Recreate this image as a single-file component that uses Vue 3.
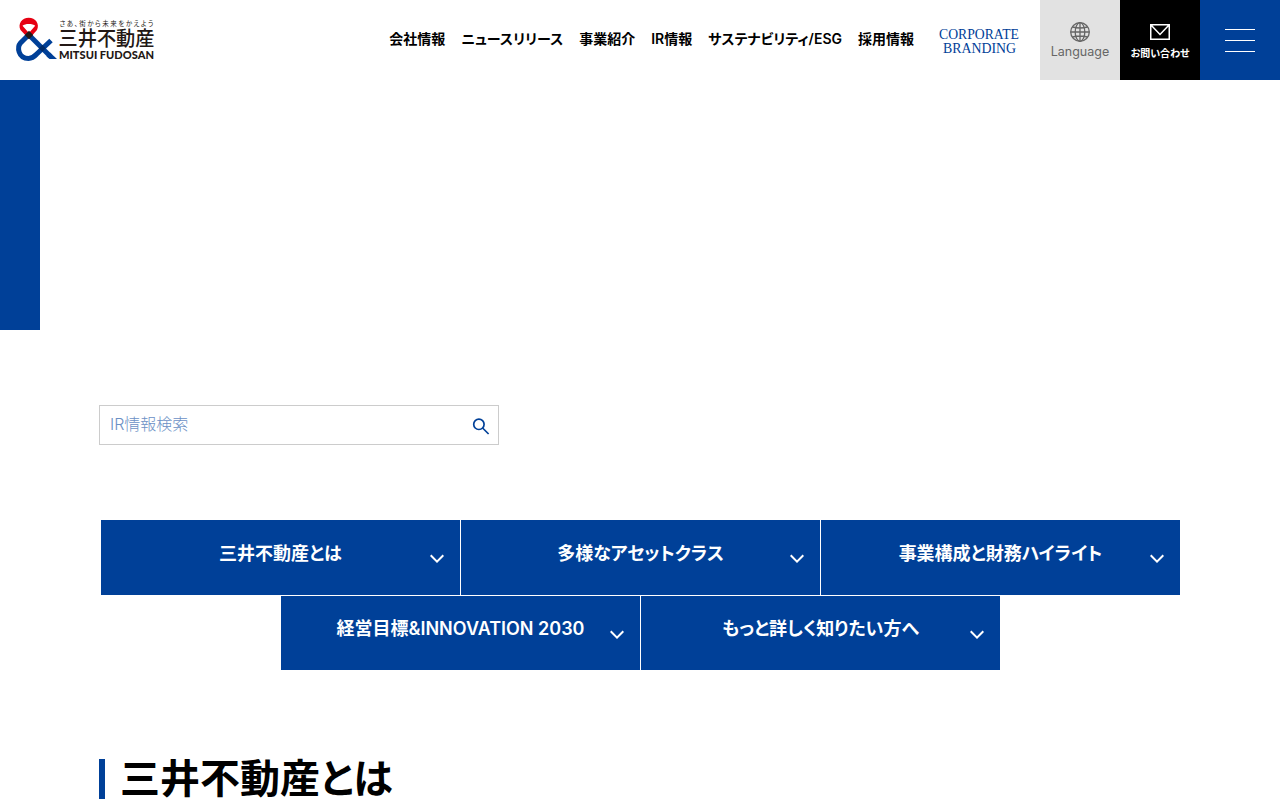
<script setup>
import { ref } from 'vue';

const keyword = ref('');

const navItems = [
  { label: '会社情報', name: 'company' },
  { label: 'ニュースリリース', name: 'news' },
  { label: '事業紹介', name: 'business' },
  { label: 'IR情報', name: 'ir' },
  { label: 'サステナビリティ/ESG', name: 'esg' },
  { label: '採用情報', name: 'recruit' },
];

const anchorRows = [
  [
    { label: '三井不動産とは', name: 'about' },
    { label: '多様なアセットクラス', name: 'asset' },
    { label: '事業構成と財務ハイライト', name: 'highlight' },
  ],
  [
    { label: '経営目標&INNOVATION 2030', name: 'innovation' },
    { label: 'もっと詳しく知りたい方へ', name: 'more' },
  ],
];
</script>

<template>
  <header class="header">
    <a class="logo" href="#">
      <svg width="160" height="80" viewBox="0 0 160 80">
        <path d="M29 39 L20.5 30 C17.5 24 22 17.8 28.7 17.8 C35.5 17.8 40 24 37 30Z M22.5 25.8 L28.9 33 L35.2 25.8 C33 23.4 24.8 23.4 22.5 25.8Z" fill="#e60012" fill-rule="evenodd" />
        <g fill="none" stroke="#004098" stroke-width="5">
          <path d="M29 34.5 L20.5 43 C17 47 18 58.4 28.5 58.4 C32 58.4 34.5 56.5 36.5 54.3 L51 40.5" />
          <path d="M28 34 L50.5 56.5" />
        </g>
        <path d="M46.5 56.2 L50 52.4 L57 59 L49.5 59Z" fill="#004098" />
        <path d="M29 30.8 L33.2 35 L29 39.2 L24.8 35Z" fill="#231815" />
        <path d="M42.3 44.8 L45.8 48.3 L42.3 51.8 L38.8 48.3Z" fill="#002b68" />
        <text class="logo-tagline" x="59.5" y="25.5" textLength="94">さあ、街から未来をかえよう</text>
        <text class="logo-name" x="58.5" y="46.3" textLength="96" lengthAdjust="spacingAndGlyphs">三井不動産</text>
        <text class="logo-roman" x="59" y="59" textLength="95" lengthAdjust="spacingAndGlyphs">MITSUI FUDOSAN</text>
      </svg>
    </a>
    <nav class="nav">
      <a v-for="item in navItems" :key="item.name" href="#" :class="['nav-item', item.name]">{{ item.label }}</a>
    </nav>
    <a class="branding" href="#">
      <svg width="82" height="30" viewBox="0 0 82 30">
        <text x="0" y="14" textLength="80" lengthAdjust="spacingAndGlyphs">CORPORATE</text>
        <text x="4" y="28" textLength="73" lengthAdjust="spacingAndGlyphs">BRANDING</text>
      </svg>
    </a>
    <button class="tile language">
      <svg width="20" height="20" viewBox="0 0 20 20" fill="none" stroke="#666" stroke-width="1.3">
        <circle cx="10" cy="10" r="9.3" />
        <ellipse cx="10" cy="10" rx="4.8" ry="9.3" />
        <path d="M10 .7V19.3M.7 10H19.3M2.5 5Q10 7 17.5 5M2.5 15Q10 13 17.5 15" />
      </svg>
      <span>Language</span>
    </button>
    <a class="tile contact" href="#">
      <svg width="20" height="16" viewBox="0 0 20 16" fill="none" stroke="#fff" stroke-width="1.5">
        <path d="M.75 .75H19.25V15.25H.75ZM1 1L10 10.5L19 1" />
      </svg>
      <span>お問い合わせ</span>
    </a>
    <button class="tile menu">
      <i></i>
      <i></i>
      <i></i>
    </button>
  </header>

  <div class="hero-bar"></div>

  <main class="main">
    <form class="search" @submit.prevent>
      <input v-model="keyword" type="text" placeholder="IR情報検索" />
      <button class="search-button" aria-label="検索">
        <svg width="18" height="18" viewBox="0 0 18 18" fill="none" stroke="#004098" stroke-width="1.7">
          <circle cx="6.9" cy="7.3" r="5.2" />
          <path d="M10.6 11L16.6 17" />
        </svg>
      </button>
    </form>

    <div class="anchors">
      <div v-for="(row, i) in anchorRows" :key="i" class="anchor-row">
        <a v-for="item in row" :key="item.name" href="#" class="anchor">
          <span :class="['anchor-label', item.name]">{{ item.label }}</span>
          <svg class="chevron" width="14" height="10" viewBox="0 0 14 10" fill="none" stroke="#fff" stroke-width="2">
            <path d="M.7 1.2L7 7.6L13.3 1.2" />
          </svg>
        </a>
      </div>
    </div>

    <h2 class="heading">三井不動産とは</h2>
  </main>
</template>

<style>
body {
  margin: 0;
  background: #fff;
  overflow: hidden;
}
</style>

<style scoped>
.header,
.main {
  font-family: Inter, "Noto Sans CJK JP", sans-serif;
  font-feature-settings: "palt";
  color: #000;
}

a {
  color: inherit;
  text-decoration: none;
}

button {
  border: 0;
  padding: 0;
  font: inherit;
}

svg {
  display: block;
}

.header {
  display: flex;
  height: 80px;
}

.logo {
  width: 160px;
}

.logo-tagline {
  font-size: 6.5px;
  font-weight: 400;
  fill: #231815;
}

.logo-name {
  font-size: 20px;
  font-weight: 500;
  fill: #231815;
}

.logo-roman {
  font-family: Lato, sans-serif;
  font-size: 10.5px;
  font-weight: 900;
  fill: #231815;
}

.nav {
  display: flex;
  align-items: center;
  gap: 16px;
  margin-left: auto;
  margin-right: 25px;
  padding-bottom: 2px;
  font-size: 14px;
  font-weight: 600;
  line-height: 20px;
  white-space: nowrap;
}

.branding {
  display: flex;
  align-items: center;
  width: 101px;
}

.branding text {
  font-family: "Liberation Serif", serif;
  font-size: 14.5px;
  fill: #004098;
}

.tile {
  display: flex;
  flex-direction: column;
  align-items: center;
  flex: none;
  box-sizing: border-box;
  width: 80px;
  height: 80px;
}

.language {
  padding-top: 22px;
  background: #e2e2e2;
  color: #666;
  font-size: 12.5px;
  line-height: 20px;
}

.contact {
  padding-top: 24px;
  background: #000;
  color: #fff;
  font-size: 10px;
  font-weight: 700;
  line-height: 14px;
}

.contact span {
  margin-top: 6px;
}

.menu {
  justify-content: center;
  gap: 10px;
  background: #004098;
}

.menu i {
  width: 30px;
  height: 1px;
  background: #fff;
}

.hero-bar {
  width: 40px;
  height: 250px;
  background: #004098;
}

.main {
  padding: 75px 99px 0;
}

.search {
  display: flex;
  box-sizing: border-box;
  width: 400px;
  height: 40px;
  border: 1px solid #ccc;
}

.search input {
  flex: 1;
  min-width: 0;
  border: 0;
  padding: 0 10px 2px;
  background: none;
  outline: none;
  font: 16px Inter, "Noto Sans CJK JP", sans-serif;
  font-feature-settings: "palt";
  font-weight: 300;
}

.search input::placeholder {
  color: #6b90c5;
  opacity: 1;
}

.search-button {
  display: flex;
  align-items: center;
  padding: 1px 8px 0 0;
  background: none;
}

.anchors {
  display: flex;
  flex-direction: column;
  gap: 1px;
  margin-top: 75px;
}

.anchor-row {
  display: flex;
  justify-content: center;
  gap: 1px;
  padding-left: 1px;
}

.anchor {
  display: flex;
  align-items: center;
  box-sizing: border-box;
  width: 359px;
  height: 75px;
  padding: 0 16px 0 30px;
  background: #004098;
  color: #fff;
}

.anchor-row:last-child .anchor {
  height: 74px;
}

.anchor-label {
  flex: 1;
  padding-bottom: 8px;
  font-size: 18px;
  font-weight: 600;
  line-height: 28px;
  text-align: center;
  white-space: nowrap;
}

.chevron {
  margin-top: 3px;
}

.heading {
  display: flex;
  align-items: center;
  height: 40px;
  margin: 89px 0 0;
  padding-left: 15px;
  border-left: 6px solid #004098;
  font-size: 40px;
  font-weight: 600;
  line-height: 40px;
  white-space: nowrap;
}
</style>
